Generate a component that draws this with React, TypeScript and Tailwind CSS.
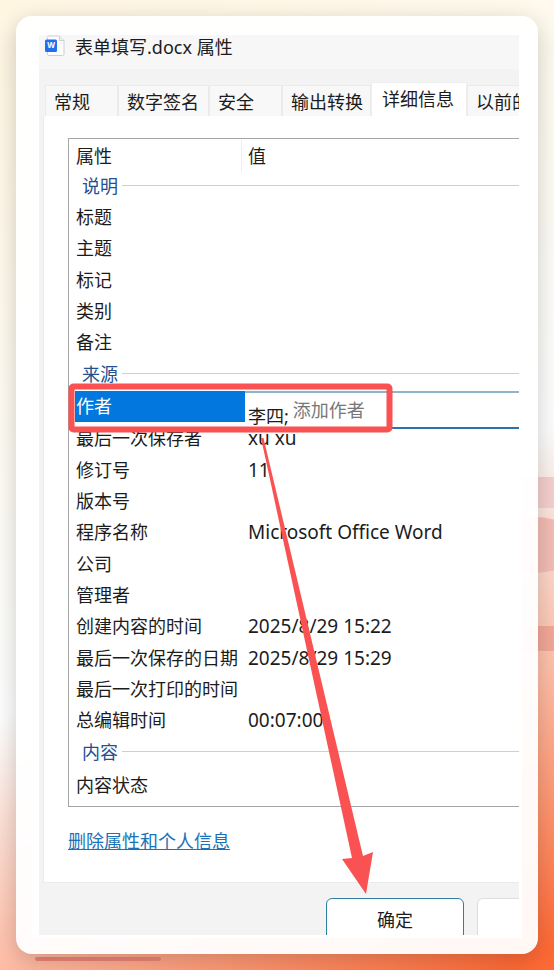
import React, { useState } from "react";

type Property = {
  name: string;
  value?: string;
  editable?: boolean;
};

type Group = {
  title: string;
  height: string;
  items: Property[];
};

const tabs = [
  { id: 1, label: "常规", width: "w-[73px]" },
  { id: 2, label: "数字签名", width: "w-[91px]" },
  { id: 3, label: "安全", width: "w-[73px]" },
  { id: 4, label: "输出转换", width: "w-[89px]" },
  { id: 5, label: "详细信息", width: "w-24" },
  { id: 6, label: "以前的", width: "w-[73px]" },
];

const groups: Group[] = [
  {
    title: "说明",
    height: "h-[29px]",
    items: [
      { name: "标题" },
      { name: "主题" },
      { name: "标记" },
      { name: "类别" },
      { name: "备注" },
    ],
  },
  {
    title: "来源",
    height: "h-[33px]",
    items: [
      { name: "作者", value: "李四;", editable: true },
      { name: "最后一次保存者", value: "xu xu" },
      { name: "修订号", value: "11" },
      { name: "版本号" },
      { name: "程序名称", value: "Microsoft Office Word" },
      { name: "公司" },
      { name: "管理者" },
      { name: "创建内容的时间", value: "2025/8/29 15:22" },
      { name: "最后一次保存的日期", value: "2025/8/29 15:29" },
      { name: "最后一次打印的时间" },
      { name: "总编辑时间", value: "00:07:00" },
    ],
  },
  {
    title: "内容",
    height: "h-[33px]",
    items: [{ name: "内容状态" }],
  },
];

const WordIcon = () => (
  <svg width="20" height="22" viewBox="0 0 20 22" aria-hidden="true">
    <path
      d="M4 1h10.5L19 5.500V19a1.500 1.500 0 0 1-1.500 1.500H4A1.500 1.500 0 0 1 2.500 19V2.500A1.500 1.500 0 0 1 4 1z"
      fill="#fdfdfd"
      stroke="#cfcfcf"
    />
    <path d="M14.500 1v4.500H19" fill="#eee" stroke="#cfcfcf" />
    <rect x="0" y="4.500" width="12" height="12.500" rx="1.500" fill="#1f6fee" />
    <text
      x="6"
      y="13"
      textAnchor="middle"
      fontSize="8"
      fontWeight="700"
      fill="#fff"
    >
      W
    </text>
  </svg>
);

const AuthorEditor = ({ value }: { value?: string }) => {
  const [author, setAuthor] = useState("");

  return (
    <div className="absolute top-0 left-1 flex h-[38px] w-80 items-center border-t-2 border-b-2 border-t-[#8fb4c8] border-b-[#2b73ad] bg-white pl-[3px]">
      <span className="mt-3">{value}</span>
      <input
        type="text"
        aria-label="添加作者"
        placeholder="添加作者"
        className="ml-1 w-40 bg-transparent placeholder:text-[#777] focus:outline-none"
        value={author}
        onChange={(e) => setAuthor(e.target.value)}
      />
    </div>
  );
};

const PropertyTable = () => (
  <table className="w-[560px] table-fixed border-collapse text-left">
    <thead>
      <tr className="h-[33px]">
        <th className="w-[172px] p-0 pl-[7px] font-normal">属性</th>
        <th className="p-0 font-normal">
          <div className="border-l border-[#e8eef2] pl-1.5 leading-8">值</div>
        </th>
      </tr>
    </thead>
    {groups.map((group) => (
      <tbody key={group.title}>
        <tr className={group.height}>
          <th
            colSpan={2}
            className="p-0 pb-0.5 pl-[13px] font-normal text-[#23508e]"
          >
            <div className="flex items-center gap-1">
              {group.title}
              <span className="h-px flex-1 bg-[#c3d3da]" />
            </div>
          </th>
        </tr>
        {group.items.map((item) =>
          item.editable ? (
            <tr key={item.name} className="h-[31px] leading-[31px]">
              <td className="p-0 pl-1.5 text-white">
                <div className="bg-[#0277dd] pl-px">{item.name}</div>
              </td>
              <td className="relative p-0">
                <div className="h-[31px] w-1 bg-[#0277dd]" />
                <AuthorEditor value={item.value} />
              </td>
            </tr>
          ) : (
            <tr key={item.name} className="h-[31px] nth-[3n]:h-8">
              <td className="p-0 pl-[7px]">{item.name}</td>
              <td className="p-0 pl-[7px] text-[19px]">{item.value}</td>
            </tr>
          )
        )}
      </tbody>
    ))}
  </table>
);

// Red frame round the author row and the arrow down to the OK button
const Annotation = () => (
  <svg
    className="pointer-events-none absolute top-0 left-0"
    width="480"
    height="900"
    viewBox="0 0 480 900"
    aria-hidden="true"
  >
    <rect
      x="32.500"
      y="351.500"
      width="318"
      height="43"
      rx="2"
      fill="none"
      stroke="#fa5252"
      strokeWidth="6"
    />
    <path d="M222 403h2.500L324 821l10-4-7 42-24-35 10-1z" fill="#fa5252" />
  </svg>
);

const Backdrop = () => (
  <div className="absolute inset-0 overflow-hidden">
    <div className="absolute top-[477px] right-0 h-[31px] w-10 bg-[#f5cfcd]" />
    <div className="absolute top-[517px] -right-7 h-14 w-24 rounded-[50%] bg-[#f3bdb4]" />
    <div className="absolute top-[626px] right-0 h-[25px] w-10 bg-[#f3a898]" />
    <div className="absolute bottom-[9px] left-[35px] h-1 w-[126px] rounded-sm bg-[#ea8578]" />
  </div>
);

const App = () => {
  const [activeTab, setActiveTab] = useState(5);

  return (
    <main
      className="relative min-h-screen bg-[linear-gradient(152deg,#fff6e2_0%,#fffaee_25%,#fdfefe_57%,#fce0d6_65%,#ffbfa8_76%,#ff6a35_98%)] p-4 text-[18px] leading-6 text-[#1c1c1c]"
      style={{ fontFamily: '"Noto Sans", "Noto Sans CJK SC", sans-serif' }}
    >
      <Backdrop />
      <section className="relative rounded-2xl bg-white/95 p-4 shadow-[0_6px_24px_rgba(0,0,0,0.2)]">
        <div className="bg-white py-[3px] pr-[3px] pl-[7px]">
          <div className="relative overflow-hidden bg-[#f3f3f3]">
            <header className="flex h-[34px] items-start gap-2.5 bg-[#f7f7f7] pl-1.5">
              <WordIcon />
              <h1>表单填写.docx 属性</h1>
            </header>

            <div role="tablist" className="flex items-end pt-[13px] pl-1.5">
              {tabs.map((tab) => (
                <button
                  key={tab.id}
                  type="button"
                  role="tab"
                  aria-selected={activeTab === tab.id}
                  onClick={() => setActiveTab(tab.id)}
                  className={`shrink-0 border border-b-0 text-left whitespace-nowrap ${
                    tab.width
                  } ${
                    activeTab === tab.id
                      ? "h-[34px] border-[#eee] bg-white px-2.5 pb-0.5"
                      : "h-[31px] border-[#ebebeb] bg-[#f8f8f8] px-2 pt-0.5"
                  }`}
                >
                  {tab.label}
                </button>
              ))}
            </div>

            <div className="ml-1 border-b border-l border-[#ebebeb] bg-white pt-[22px] pb-[29px] pl-6">
              <div className="overflow-hidden border border-r-0 border-[#a5a5a5] pb-1.5">
                <PropertyTable />
              </div>
              <a
                href="#remove"
                className="mt-[22px] inline-block text-[#1a73b8] underline"
              >
                删除属性和个人信息
              </a>
            </div>

            <footer className="flex h-[52px] gap-[13px] overflow-hidden pt-[15px] pl-[287px]">
              <button
                type="button"
                className="h-11 w-[138px] shrink-0 rounded-md border border-[#2f7f9f] bg-white"
              >
                确定
              </button>
              <button
                type="button"
                aria-label="取消"
                className="h-11 w-[138px] shrink-0 rounded-md border border-[#ddd] bg-white"
              />
            </footer>
            <Annotation />
          </div>
        </div>
      </section>
    </main>
  );
};

export default App;
